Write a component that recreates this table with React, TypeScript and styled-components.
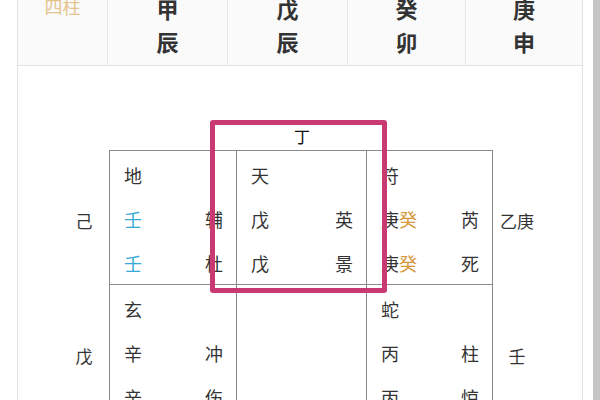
import React from 'react';
import styled, { createGlobalStyle } from 'styled-components';

const Global = createGlobalStyle`
  *, *::before, *::after { box-sizing: border-box; }
  html, body { margin: 0; padding: 0; background: #fff; overflow: hidden; }
  body { font-family: "Noto Sans CJK SC", "Noto Sans", sans-serif; color: #333; }
`;

const Page = styled.div`
  display: flex;
  width: 600px;
  height: 400px;
  overflow: hidden;
`;

const Main = styled.div`
  flex: 1;
  padding: 0 10px 0 17px;
`;

const ScrollTrack = styled.div`
  width: 7px;
  background: #c6c6c6;
`;

const Card = styled.div`
  margin-top: -30px;
  border-left: 1px solid #e2e2e2;
  border-right: 1px solid #e2e2e2;
  background: #fff;
`;

const HeaderRow = styled.div`
  display: grid;
  grid-template-columns: 89px 120px 120px 118px 1fr;
  height: 96px;
  background: #fafafa;
  border-bottom: 1px solid #e2e2e2;
`;

const HeaderCell = styled.div<{ $first?: boolean; $pad: number }>`
  border-left: ${(p) => (p.$first ? 'none' : '1px solid #e6e6e6')};
  padding-top: ${(p) => p.$pad}px;
  text-align: center;
`;

const PillarLabel = styled.div`
  font-size: 18px;
  line-height: 33px;
  color: #e3c48f;
`;

const PillarChar = styled.div`
  font-size: 22px;
  line-height: 33px;
  font-weight: 700;
  color: #333;
`;

const Body = styled.div`
  padding-top: 55px;
  height: 400px;
`;

const Diagram = styled.div`
  position: relative;
  display: grid;
  grid-template-columns: 50px 128px 130px 126px 48px;
  grid-template-rows: 29px 135px 134px;
  width: max-content;
  margin: 0 auto;
`;

const TopLabel = styled.div`
  display: flex;
  align-items: center;
  justify-content: center;
  font-size: 16px;
  color: #111;
`;

const SideLabel = styled.div`
  display: flex;
  align-items: center;
  justify-content: center;
  padding-top: 6px;
  font-size: 17px;
  color: #333;
`;

const Palace = styled.div<{ $firstCol?: boolean; $firstRow?: boolean }>`
  border-right: 1px solid #8a8a8a;
  border-bottom: 1px solid #8a8a8a;
  border-left: ${(p) => (p.$firstCol ? '1px solid #8a8a8a' : 'none')};
  border-top: ${(p) => (p.$firstRow ? '1px solid #8a8a8a' : 'none')};
  padding: 2px 13px 0 14px;
`;

const Line = styled.div`
  display: flex;
  justify-content: space-between;
  font-size: 18px;
  line-height: 44px;
  color: #333;
`;

const Glyph = styled.span<{ $tone?: 'cyan' | 'gold' }>`
  color: ${(p) => (p.$tone === 'cyan' ? '#36aad6' : p.$tone === 'gold' ? '#d6983c' : '#333')};
`;

const Highlight = styled.div`
  position: absolute;
  left: 151px;
  top: -1px;
  width: 177px;
  height: 173px;
  border: 5px solid #c93a73;
  border-radius: 3px;
  pointer-events: none;
`;

type Tone = 'cyan' | 'gold' | undefined;
type PLine = { left: Array<{ t: string; tone?: Tone }>; right?: string };
type PalaceData = PLine[];

const pillars = [
  ['甲', '辰'],
  ['戊', '辰'],
  ['癸', '卯'],
  ['庚', '申'],
];

const rows: { left: string; right: string; palaces: PalaceData[] }[] = [
  {
    left: '己',
    right: '乙庚',
    palaces: [
      [
        { left: [{ t: '地' }] },
        { left: [{ t: '壬', tone: 'cyan' }], right: '辅' },
        { left: [{ t: '壬', tone: 'cyan' }], right: '杜' },
      ],
      [
        { left: [{ t: '天' }] },
        { left: [{ t: '戊' }], right: '英' },
        { left: [{ t: '戊' }], right: '景' },
      ],
      [
        { left: [{ t: '符' }] },
        { left: [{ t: '庚' }, { t: '癸', tone: 'gold' }], right: '芮' },
        { left: [{ t: '庚' }, { t: '癸', tone: 'gold' }], right: '死' },
      ],
    ],
  },
  {
    left: '戊',
    right: '壬',
    palaces: [
      [
        { left: [{ t: '玄' }] },
        { left: [{ t: '辛' }], right: '冲' },
        { left: [{ t: '辛' }], right: '伤' },
      ],
      [],
      [
        { left: [{ t: '蛇' }] },
        { left: [{ t: '丙' }], right: '柱' },
        { left: [{ t: '丙' }], right: '惊' },
      ],
    ],
  },
];

export default function App() {
  return (
    <>
      <Global />
      <Page>
        <Main>
          <Card>
            <HeaderRow>
              <HeaderCell $first $pad={20}>
                <PillarLabel>四柱</PillarLabel>
              </HeaderCell>
              {pillars.map((p, i) => (
                <HeaderCell key={i} $pad={22}>
                  <PillarChar>{p[0]}</PillarChar>
                  <PillarChar>{p[1]}</PillarChar>
                </HeaderCell>
              ))}
            </HeaderRow>
            <Body>
              <Diagram>
                <div />
                <div />
                <TopLabel>丁</TopLabel>
                <div />
                <div />
                {rows.map((row, ri) => (
                  <React.Fragment key={ri}>
                    <SideLabel>{row.left}</SideLabel>
                    {row.palaces.map((pal, ci) => (
                      <Palace key={ci} $firstCol={ci === 0} $firstRow={ri === 0}>
                        {pal.map((ln, li) => (
                          <Line key={li}>
                            <span>
                              {ln.left.map((g, gi) => (
                                <Glyph key={gi} $tone={g.tone}>
                                  {g.t}
                                </Glyph>
                              ))}
                            </span>
                            {ln.right && <span>{ln.right}</span>}
                          </Line>
                        ))}
                      </Palace>
                    ))}
                    <SideLabel>{row.right}</SideLabel>
                  </React.Fragment>
                ))}
                <Highlight />
              </Diagram>
            </Body>
          </Card>
        </Main>
        <ScrollTrack />
      </Page>
    </>
  );
}
